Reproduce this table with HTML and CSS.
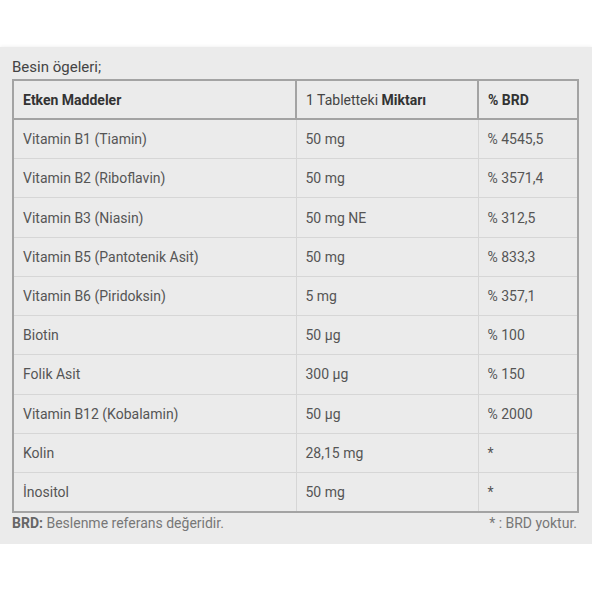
FILE: index.html
```html
<!DOCTYPE html>
<html lang="tr">
<head>
<meta charset="utf-8">
<link rel="stylesheet" href="styles.css">
</head>
<body>
<div class="panel">
  <div class="title">Besin ögeleri;</div>
  <table class="nutri">
    <colgroup><col class="c1"><col class="c2"><col class="c3"></colgroup>
    <thead>
      <tr><th><b>Etken Maddeler</b></th><th>1 Tabletteki <b>Miktarı</b></th><th><b>% BRD</b></th></tr>
    </thead>
    <tbody>
      <tr><td>Vitamin B1 (Tiamin)</td><td>50 mg</td><td>% 4545,5</td></tr>
      <tr><td>Vitamin B2 (Riboflavin)</td><td>50 mg</td><td>% 3571,4</td></tr>
      <tr><td>Vitamin B3 (Niasin)</td><td>50 mg NE</td><td>% 312,5</td></tr>
      <tr><td>Vitamin B5 (Pantotenik Asit)</td><td>50 mg</td><td>% 833,3</td></tr>
      <tr><td>Vitamin B6 (Piridoksin)</td><td>5 mg</td><td>% 357,1</td></tr>
      <tr><td>Biotin</td><td>50 µg</td><td>% 100</td></tr>
      <tr><td>Folik Asit</td><td>300 µg</td><td>% 150</td></tr>
      <tr><td>Vitamin B12 (Kobalamin)</td><td>50 µg</td><td>% 2000</td></tr>
      <tr><td>Kolin</td><td>28,15 mg</td><td>*</td></tr>
      <tr><td>İnositol</td><td>50 mg</td><td>*</td></tr>
    </tbody>
  </table>
  <div class="foot">
    <span><b>BRD:</b> Beslenme referans değeridir.</span>
    <span>* : BRD yoktur.</span>
  </div>
</div>
</body>
</html>
```
FILE: styles.css
```css
html, body { margin: 0; padding: 0; background: #fff; }
body { font-family: Roboto, "Liberation Sans", sans-serif; color: #555; }
.panel {
  margin-top: 47px;
  background: #ebebeb;
  padding: 10px 15px 10px 12px;
  box-shadow: 0 0 4px rgba(0,0,0,0.08);
  height: 477px;
}
.title { font-size: 15px; line-height: 20px; color: #444; margin-bottom: 2px; }
.nutri {
  width: 565px;
  table-layout: fixed;
  border-collapse: collapse;
  border: 2px solid #a3a3a3;
  font-size: 14px;
}
.c1 { width: 283px; }
.c2 { width: 182px; }
.c3 { width: 100px; }
.nutri th {
  text-align: left;
  font-weight: normal;
  color: #444;
  height: 37px;
  padding: 0 0 0 9px;
  border: 2px solid #a3a3a3;
}
.nutri th b { color: #333; }
.nutri td {
  height: 38.22px;
  padding: 0 0 0 9px;
  border: 1px solid #d6d6d6;
  color: #555;
}
.nutri tr:last-child td { border-bottom: 2px solid #a3a3a3; }
.foot {
  width: 565px;
  display: flex;
  justify-content: space-between;
  font-size: 14px;
  line-height: 20px;
  color: #777;
}
.foot b { color: #666; }
```
